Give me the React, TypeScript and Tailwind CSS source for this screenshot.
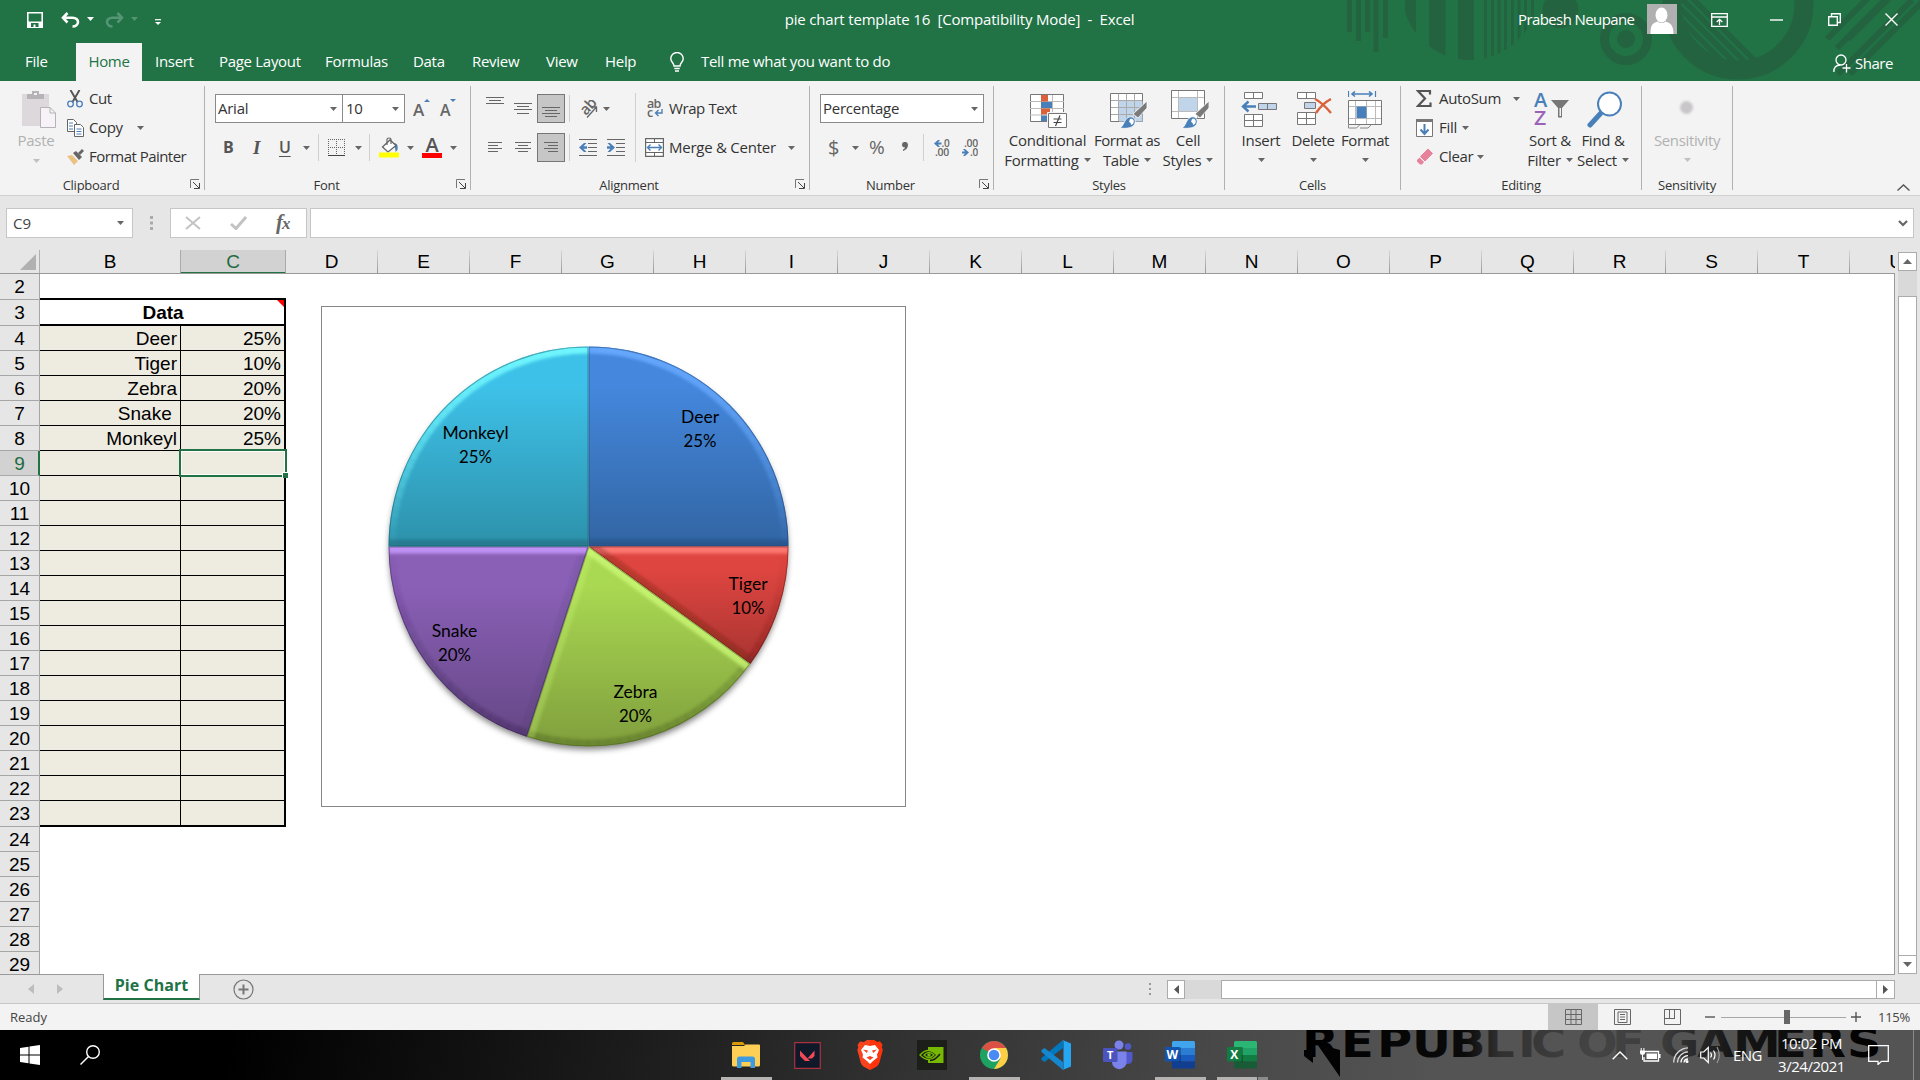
import React from "react";

type P = { children?: React.ReactNode; className?: string };

const Caret = ({ className = "text-[#666]" }: { className?: string }) => (
  <svg width="7" height="4" viewBox="0 0 7 4" className={`shrink-0 ${className}`}>
    <path d="M0 0h7L3.5 4z" fill="currentColor" />
  </svg>
);

const Svg = ({ w, h, children, className = "" }: P & { w: number; h: number }) => (
  <svg width={w} height={h} viewBox={`0 0 ${w} ${h}`} fill="none" className={`shrink-0 ${className}`}>
    {children}
  </svg>
);

/* ---------- Title bar ---------- */

const HeaderPattern = () => (
  <svg width="620" height="81" viewBox="1300 0 620 81" className="absolute right-0 top-0">
    <defs>
      <clipPath id="hp-disc"><circle cx="1470" cy="-8" r="68" /></clipPath>
      <clipPath id="hp-ring"><circle cx="1738" cy="4" r="66" /></clipPath>
    </defs>
    <g fill="#24633f">
      <path d="M1347 0h5v32h-5zM1356 0h5v41h-5zM1365 0h5v32h-5zM1373.500 0h5v52h-5zM1383 0h5v38h-5z" />
      <path
        clipPath="url(#hp-disc)"
        d="M1405 0h11v81h-11zM1429 0h16.500v81H1429zM1458 0h16v81h-16zM1484 0h3v81h-3zM1491 0h3v81h-3zM1497.500 0h3v81h-3zM1504 0h3v81h-3zM1511 0h3v81h-3zM1517.500 0h3v81h-3zM1524 0h3v81h-3zM1531 0h3v81h-3z"
      />
      <circle cx="1560.500" cy="10" r="18" />
      <circle cx="1626" cy="39" r="9" />
    </g>
    <g fill="none" stroke="#24633f">
      <circle cx="1626" cy="39" r="21.500" strokeWidth="9" />
      <circle cx="1738" cy="4" r="66" strokeWidth="19" />
      <g clipPath="url(#hp-ring)" strokeWidth="5.500">
        <path d="M1660 -12l90 90M1660 -1l90 90M1660 10l90 90M1671 -12l90 90M1682 -12l90 90" />
      </g>
      <g strokeWidth="6">
        <path d="M1827 39l42-42M1837 48l50-50M1848 39l42-42M1838 74l74-74M1850 74l74-74" />
      </g>
    </g>
  </svg>
);

const TitleBar = () => (
  <div className="relative z-10 flex h-[43px] items-start pt-[3px] text-[15px] text-white">
    <div className="flex h-[34px] w-[560px] items-center pl-[27px]">
      <Svg w={16} h={16}>
        <path d="M.8.8h14.400v14.400H.8z" stroke="#fff" strokeWidth="1.600" />
        <path d="M1 9.500h14V15H1z" fill="#fff" />
        <path d="M4 11h7.500v4H4z" fill="#217346" /><path d="M6.500 12.500h2V15h-2z" fill="#fff" />
      </Svg>
      <Svg w={19} h={16} className="ml-[18px]">
        <path d="M6.500 1L2 5.800l4.500 4.700M2 5.800h9.500c3.600 0 5.500 2 5.500 4.300 0 2.600-2.400 4.400-5.500 4.400" stroke="#fff" strokeWidth="2.600" />
      </Svg>
      <Caret className="mb-[3px] ml-[7px] text-white" />
      <Svg w={19} h={16} className="ml-[11px]">
        <path d="M12.500 1L17 5.800l-4.500 4.700M17 5.800H7.500C3.900 5.800 2 7.800 2 10.100c0 2.600 2.400 4.400 5.500 4.400" stroke="#549574" strokeWidth="2.600" />
      </Svg>
      <Caret className="mb-[3px] ml-[7px] text-[#549574]" />
      <Svg w={6} h={7} className="ml-[17px] mt-[4px]">
        <path d="M0 .7h6" stroke="#fff" strokeWidth="1.200" /><path d="M0 3h6L3 6z" fill="#fff" />
      </Svg>
    </div>
    <div className="flex h-[33px] w-[799px] items-center justify-center whitespace-pre tracking-[-0.180px]">
      pie chart template 16  [Compatibility Mode]  -  Excel
    </div>
    <div className="flex h-[33px] flex-1 items-center">
      <span className="ml-[159px] w-[129px] whitespace-nowrap tracking-[-0.600px]">Prabesh Neupane</span>
      <svg width="30" height="30" viewBox="0 0 30 30" className="-mt-[1px]">
        <path fill="#b0b0b0" d="M0 0h30v30H0z" />
        <ellipse cx="14.500" cy="11" rx="6" ry="7.500" fill="#fff" />
        <path d="M3.500 30c0-8 1.500-11 7-12.500 2.500 2 5.500 2 8 0 5.500 1.500 8 4.500 8 12.500z" fill="#fff" />
      </svg>
      <Svg w={17} h={14} className="ml-[34px]">
        <path d="M.7.7h15.600v12.600H.7zM.7 4h15.600" stroke="#fff" strokeWidth="1.300" />
        <path d="M8.500 12V6.500M5.700 9l2.800-2.700L11.300 9" stroke="#fff" strokeWidth="1.300" />
      </Svg>
      <Svg w={13} h={2} className="ml-[42px]"><path d="M0 1h13" stroke="#fff" strokeWidth="1.400" /></Svg>
      <Svg w={13} h={13} className="ml-[45px]">
        <path d="M.7 3.700h8.600v8.600H.7zM3.500 3V.7h8.800v8.800H10" stroke="#fff" strokeWidth="1.400" />
      </Svg>
      <Svg w={13} h={13} className="ml-[44px]">
        <path d="M.5.5l12 12M12.500.5l-12 12" stroke="#fff" strokeWidth="1.400" />
      </Svg>
    </div>
  </div>
);

const TabBar = () => (
  <div className="relative z-10 flex h-[38px] items-center whitespace-nowrap text-[15px] tracking-[-0.300px] text-white [&>span]:pb-[2px]">
    <span className="w-[76px] pl-[25px]">File</span>
    <span className="flex h-[38px] w-[66px] items-center justify-center bg-[#f3f3f3] text-[#217346]">Home</span>
    <span className="w-[76px] pl-[13px]">Insert</span>
    <span className="w-[107px] pl-px">Page Layout</span>
    <span className="w-[88px]">Formulas</span>
    <span className="w-[59px]">Data</span>
    <span className="w-[74px]">Review</span>
    <span className="w-[59px]">View</span>
    <span className="w-[65px]">Help</span>
    <Svg w={14} h={20}>
      <path d="M4 14c0-3-3.200-4-3.200-7.300a6.200 6.200 0 0112.400 0C13.200 10 10 11 10 14zM4.300 16.500h5.400M5 19h4" stroke="#fff" strokeWidth="1.400" />
    </Svg>
    <span className="ml-[17px] w-[1132px]">Tell me what you want to do</span>
    <Svg w={18} h={19} className="mt-[3px]">
      <circle cx="8" cy="6" r="5" stroke="#fff" strokeWidth="1.300" />
      <path d="M.8 18c0-4 2-7 6.500-7M9.500 14h8M13.500 10v8.500" stroke="#fff" strokeWidth="1.300" />
    </Svg>
    <span className="ml-[4px] mt-[5px] tracking-[-0.500px]">Share</span>
  </div>
);

/* ---------- Ribbon ---------- */

const Sep = ({ className = "" }: { className?: string }) => <div className={`w-px shrink-0 bg-[#d0d0d0] ${className}`} />;

const Group = ({ label, launcher, width, children }: P & { label: string; launcher?: boolean; width: string }) => (
  <>
    <section className={`flex h-[114px] shrink-0 flex-col ${width}`}>
      <div className="flex h-[93px] items-start">{children}</div>
      <div className="flex h-[23px] items-center">
        <span className="mt-[2px] flex-1 whitespace-nowrap text-center text-[13px] leading-[16px] text-[#333]">{label}</span>
        {launcher && (
          <Svg w={10} h={10} className="ml-[8px] mr-[4px]">
            <path d="M.5 9V.5H9" stroke="#777" />
            <path d="M3 3l6 6M9.500 4v5.500H4" stroke="#444" />
          </Svg>
        )}
      </div>
    </section>
    <div className="mt-[5px] h-[104px] w-px shrink-0 bg-[#b1b1b1]" />
  </>
);

const Big = ({ icon, lines, width, caretRow, muted }: { icon: React.ReactNode; lines: string[]; width: string; caretRow?: boolean; muted?: boolean }) => (
  <div className={`flex shrink-0 flex-col items-center whitespace-nowrap text-[15px] leading-[20px] tracking-[-0.250px] ${muted ? "text-[#b1b1b1]" : "text-[#333]"} ${width}`}>
    <div className="flex h-[49px] items-end pb-px">{icon}</div>
    <span>{lines[0]}</span>
    <span className="flex h-[20px] items-center gap-[5px]">
      {!caretRow && lines[1]}
      <Caret className={muted ? "text-[#c0c0c0]" : "text-[#666]"} />
    </span>
  </div>
);

const Lines = ({ rows, w = 18, h }: { rows: [number, number, number][]; w?: number; h: number }) => (
  <Svg w={w} h={h}>
    {rows.map(([x1, x2, y], i) => (
      <path key={i} d={`M${x1} ${y + 0.5}H${x2}`} stroke="#666" />
    ))}
  </Svg>
);

const IndentIcon = ({ flip }: { flip?: boolean }) => (
  <Svg w={19} h={17}>
    <path d="M0 .5h18M9 4.500h9M9 8.500h9M9 12.500h9M0 16.500h18" stroke="#666" />
    <g transform={flip ? "matrix(-1 0 0 1 8 0)" : undefined}>
      <path d="M0 8.500L5 4h2.500L4.500 7.200H8v2.600H4.500L7.500 13H5z" fill="#4a7fb8" />
    </g>
  </Svg>
);

const Brush = ({ x, y }: { x: number; y: number }) => (
  <g transform={`translate(${x} ${y})`}>
    <path d="M27 0v7L18 17l-5-4z" fill="#7a7a7a" stroke="#fff" strokeWidth=".8" />
    <path d="M0 27c4-2 4-9 9-11 4-1 7 2 6 6-1 5-9 6-15 5z" fill="#4a80b9" stroke="#fff" strokeWidth=".8" />
    <path d="M10 18c3-1 5 2 3 5l-2 1c0-2-1-3-2-3z" fill="#fff" />
  </g>
);

const Ribbon = () => (
  <div className="flex h-[115px] border-b border-[#d0d0d0] bg-[#f3f3f3] text-[15px] tracking-[-0.250px] text-[#333]">
    <Group label="Clipboard" launcher width="w-[204px]">
      <div className="flex w-[67px] flex-col items-center pl-[5px] text-[#b1b1b1]">
        <Svg w={34} h={38} className="ml-[6px] mt-[9px]">
          <path d="M0 4h27v32H0z" fill="#dcd8dc" />
          <path d="M5 9V4h5V1h7v3h5v5z" fill="#b5b3b5" />
          <path d="M12 3h3v2h-3z" fill="#f3f3f3" />
          <path d="M18.500 17.500h9.500l5.500 5.500v14.500h-15z" fill="#f6f2f7" stroke="#b5b3b5" />
          <path d="M28 17.500V23h5.500" stroke="#b5b3b5" />
        </Svg>
        <span className="mt-[2px] leading-[20px]">Paste</span>
        <Caret className="mt-[9px] text-[#c0c0c0]" />
      </div>
      <div className="flex flex-col pt-[3px]">
        <div className="flex h-[29px] items-center">
          <Svg w={16} h={18}>
            <path d="M3.500 0l7 12M12.500 0l-7 12" stroke="#555" strokeWidth="1.900" />
            <circle cx="3.500" cy="14" r="2.800" stroke="#4a7fb8" strokeWidth="1.300" />
            <circle cx="12.500" cy="14" r="2.800" stroke="#4a7fb8" strokeWidth="1.300" />
          </Svg>
          <span className="ml-[6px] tracking-[-0.500px]">Cut</span>
        </div>
        <div className="flex h-[29px] items-center">
          <Svg w={17} h={18}>
            <path d="M.5.5h6l3 3v9h-9z" fill="#fff" stroke="#666" />
            <path d="M7.500 5.500h6l3 3v9h-9z" fill="#fff" stroke="#666" />
            <path d="M2 4h4M2 7h4M2 10h4M9.500 10h5M9.500 12.500h5M9.500 15h5" stroke="#4a7fb8" />
          </Svg>
          <span className="ml-[5px] w-[48px] tracking-[-0.400px]">Copy</span>
          <Caret />
        </div>
        <div className="flex h-[29px] items-center">
          <Svg w={17} h={16}>
            <path d="M0 7l5-1 6 6-4 4z" fill="#eac282" />
            <path d="M6 4l3-2 6 6-3 3z" fill="#666" /><path d="M11 4l4-4 2 2-4 4z" fill="#666" />
          </Svg>
          <span className="ml-[5px] whitespace-nowrap tracking-[-0.530px]">Format Painter</span>
        </div>
      </div>
    </Group>

    <Group label="Font" launcher width="w-[265px]">
      <div className="flex flex-col pl-[10px] pt-[8px]">
        <div className="flex h-[39px] items-center">
          <div className="flex h-[29px] w-[128px] items-center justify-between border border-[#8a8a8a] bg-white pl-[2px] pr-[5px]">Arial <Caret /></div>
          <div className="-ml-px flex h-[29px] w-[63px] items-center justify-between border border-[#8a8a8a] bg-white pl-[3px] pr-[5px]">10 <Caret /></div>
          <span className="ml-[8px] mt-[1px] w-[11px] text-[17px] font-semibold leading-none text-[#666]">A</span>
          <Svg w={6} h={3} className="mb-[17px]"><path d="M0 3h6L3 0z" fill="#4a7fb8" /></Svg>
          <span className="ml-[10px] mt-[2px] w-[10px] text-[16px] font-semibold leading-none text-[#666]">A</span>
          <Svg w={6} h={3} className="mb-[16px]"><path d="M0 0h6L3 3z" fill="#4a7fb8" /></Svg>
        </div>
        <div className="flex h-[39px] items-center text-[16px] text-[#555]">
          <span className="ml-[8px] w-[30px] pb-px font-bold">B</span>
          <span className="w-[26px] font-['Liberation_Serif',serif] text-[19px] font-bold italic leading-none">I</span>
          <span className="w-[24px] pb-px font-semibold underline underline-offset-[3px]">U</span>
          <Caret />
          <Sep className="ml-[8px] h-[27px]" />
          <Svg w={17} h={17} className="ml-[9px]">
            <path d="M.5 0v17M8.500 0v17M16.500 0v17M0 .5h17M0 8.500h17" stroke="#666" strokeDasharray="1 1" />
            <path d="M0 16.500h17" stroke="#444" />
          </Svg>
          <Caret className="ml-[10px] text-[#666]" />
          <Sep className="ml-[7px] h-[27px]" />
          <Svg w={21} h={21} className="ml-[9px]">
            <path d="M14 6c5 0 5 3 4.500 7l-2 2c0-4-.5-5-3.500-7z" fill="#4a7fb8" />
            <path d="M3.500 10L11 3l6 5.500-8 6.500z" fill="#fff" stroke="#666" strokeWidth="1.300" />
            <path d="M8 8V2.500C8 .5 12 .5 12 2.500V7" stroke="#666" strokeWidth="1.200" />
            <path d="M0 15.500h20v5H0z" fill="#ff0" />
          </Svg>
          <Caret className="ml-[7px] text-[#666]" />
          <div className="ml-[8px] flex w-[20px] flex-col items-center">
            <span className="text-[20px] font-semibold leading-[15px]">A</span>
            <div className="mt-px h-[5px] w-[20px] bg-[#f00]" />
          </div>
          <Caret className="ml-[8px] text-[#666]" />
        </div>
      </div>
    </Group>

    <Group label="Alignment" launcher width="w-[338px]">
      <div className="flex flex-col pt-[8px]">
        <div className="flex h-[39px] items-center">
          <div className="ml-[15px] flex w-[51px] justify-between">
            <div className="-mt-[6px]"><Lines h={7} rows={[[0, 18, 0], [3, 15, 3], [0, 18, 6]]} /></div>
            <div className="mr-[5px]"><Lines h={11} rows={[[0, 18, 0], [3, 15, 3], [0, 18, 6], [3, 15, 10]]} /></div>
          </div>
          <div className="flex h-[29px] w-[28px] items-end justify-center border border-[#777] bg-[#c6c6c6] pb-[4px]">
            <Lines h={11} rows={[[0, 18, 0], [3, 15, 3], [0, 18, 6], [3, 15, 9]]} />
          </div>
          <Sep className="ml-[4px] h-[27px]" />
          <Svg w={19} h={18} className="ml-[9px]">
            <text x="0" y="0" transform="translate(7 16) rotate(-48)" fontSize="15" fontWeight="600" fill="#666" letterSpacing="-.5">ab</text>
            <path d="M8 17.500L17.500 7M17.500 12V7h-5" stroke="#666" strokeWidth="1.300" />
          </Svg>
          <Caret className="ml-[5px] text-[#666]" />
        </div>
        <div className="flex h-[39px] items-center">
          <div className="ml-[17px] flex w-[49px] justify-between">
            <Lines w={14} h={11} rows={[[0, 14, 0], [0, 10, 3], [0, 14, 6], [0, 10, 9]]} />
            <div className="mr-[6px]"><Lines w={16} h={11} rows={[[0, 16, 0], [3, 13, 3], [0, 16, 6], [3, 13, 9]]} /></div>
          </div>
          <div className="flex h-[29px] w-[28px] items-center justify-center border border-[#777] bg-[#c6c6c6]">
            <Lines w={14} h={11} rows={[[0, 14, 0], [4, 14, 3], [0, 14, 6], [4, 14, 9]]} />
          </div>
          <Sep className="ml-[4px] mr-[9px] h-[27px]" />
          <IndentIcon />
          <div className="w-[9px]" />
          <IndentIcon flip />
        </div>
      </div>
      <Sep className="ml-[9px] mt-[12px] h-[69px]" />
      <div className="flex flex-col pl-[9px] pt-[8px]">
        <div className="flex h-[39px] items-center">
          <Svg w={17} h={19} className="ml-[2px]">
            <text x="0" y="9" fontSize="12.500" fontWeight="600" fill="#666" textLength="14">ab</text>
            <text x="0" y="17.500" fontSize="12.500" fontWeight="600" fill="#666">c</text>
            <path d="M15 10v4H9M11.500 11L8.500 14l3 3" stroke="#4a7fb8" strokeWidth="1.400" />
          </Svg>
          <span className="ml-[5px] whitespace-nowrap tracking-[-0.400px]">Wrap Text</span>
        </div>
        <div className="flex h-[39px] items-center">
          <Svg w={19} h={19}>
            <path d="M.6.6h17.800v17.800H.6z" fill="#fff" stroke="#666" strokeWidth="1.200" />
            <path d="M.6 4.500h17.800M.6 14.500h17.800M9.500 0v4.500M9.500 14.500V19" stroke="#666" />
            <path d="M2.500 9.500h14M5.500 6.500l-3 3 3 3M13.500 6.500l3 3-3 3" stroke="#4a7fb8" strokeWidth="1.400" />
          </Svg>
          <span className="ml-[5px] w-[119px] whitespace-nowrap">Merge &amp; Center</span>
          <Caret />
        </div>
      </div>
    </Group>

    <Group label="Number" launcher width="w-[183px]">
      <div className="flex flex-col pl-[10px] pt-[8px]">
        <div className="flex h-[39px] items-center">
          <div className="flex h-[29px] w-[164px] items-center justify-between border border-[#8a8a8a] bg-white pl-[2px] pr-[5px]">Percentage <Caret /></div>
        </div>
        <div className="flex h-[39px] items-center text-[#666]">
          <span className="ml-[8px] w-[24px] text-[20px]">$</span>
          <Caret />
          <span className="ml-[10px] w-[33px] text-[19px]">%</span>
          <Svg w={6} h={9} className="-mt-[2px]"><path d="M0 3a3 3 0 016-.2C6 6 4 8 1 9V7.500c1.400-.6 2-1.200 2-2C1 5.500 0 4.500 0 3z" fill="#666" /></Svg>
          <Sep className="ml-[15px] h-[27px]" />
          <Svg w={16} h={18} className="ml-[10px]">
            <path d="M0 4.500L4 1h2L4 3.500h3.500v2H4L6 8H4z" fill="#4a7fb8" />
            <text x="7.500" y="8" fontSize="10" fontWeight="600" fill="#666" textLength="8" lengthAdjust="spacingAndGlyphs">.0</text>
            <text x="1" y="17" fontSize="10" fontWeight="600" fill="#666" textLength="14" lengthAdjust="spacingAndGlyphs">.00</text>
          </Svg>
          <Svg w={16} h={18} className="ml-[12px]">
            <text x="2" y="8" fontSize="10" fontWeight="600" fill="#666" textLength="14" lengthAdjust="spacingAndGlyphs">.00</text>
            <text x="8" y="17" fontSize="10" fontWeight="600" fill="#666" textLength="8" lengthAdjust="spacingAndGlyphs">.0</text>
            <path d="M7 13.500L3 10H1l2 2.500H0v2h3L1 17h2z" fill="#4a7fb8" />
          </Svg>
        </div>
      </div>
    </Group>

    <Group label="Styles" width="w-[230px]">
      <Big
        width="w-[91px] ml-[8px]"
        lines={["Conditional", "Formatting"]}
        icon={
          <Svg w={38} h={35} className="ml-[2px]">
            <path d="M.5.5h33v27H.5z" fill="#fff" stroke="#777" />
            <path d="M0 7.500h34M0 14.500h34M0 21h34M11.500 1v26M22.500 1v26" stroke="#bbb" />
            <path d="M11 1h7v6.500h-7zM11 14.500h9v6h-9z" fill="#d9613b" />
            <path d="M11 8h11v6H11zM11 21.500h6V27h-6z" fill="#4a80b9" />
            <path d="M17.500 18.500h20v16h-20z" fill="#fff" stroke="#f3f3f3" />
            <path d="M18.500 19.500h18v14h-18z" fill="#fff" stroke="#777" />
            <path d="M23.500 25h8M23.500 28.500h8M30 21.500L25.500 32" stroke="#444" strokeWidth="1.200" />
          </Svg>
        }
      />
      <Big
        width="w-[68px] tracking-[-0.400px]"
        lines={["Format as", "Table"]}
        icon={
          <Svg w={38} h={36} className="ml-[3px]">
            <path d="M.5.5h32v28H.5z" fill="#fff" stroke="#777" />
            <path d="M9 8h23.500v20.500H9z" fill="#c0d4ea" />
            <path d="M1 7.500h31M1 14.500h31M1 21.500h31M8.500 1v27M16.500 1v27M24.500 1v27" stroke="#aaa" />
            <Brush x={10} y={8} />
          </Svg>
        }
      />
      <Big
        width="w-[54px]"
        lines={["Cell", "Styles"]}
        icon={
          <Svg w={38} h={39} className="ml-[3px]">
            <path d="M.5.500h33v28H.5z" fill="#fff" stroke="#777" />
            <path d="M1 7.500h32M1 21.500h32M7.500 1v27M26.500 1v27" stroke="#bbb" />
            <path d="M8 8h18v13H8z" fill="#c0d4ea" />
            <Brush x={11} y={11} />
          </Svg>
        }
      />
    </Group>

    <Group label="Cells" width="w-[175px]">
      <Big
        width="w-[52px] ml-[10px]"
        lines={["Insert"]}
        caretRow
        icon={
          <Svg w={38} h={38} className="-ml-[2px]">
            <path d="M3.500 1.500h18v6h-18zM3.500 23.500h18v12h-18zM12.500 1.500v6M12.500 23.500v12M3.500 29.500h18" fill="#fff" stroke="#777" />
            <path d="M17.500 12.500h18v6h-18z" fill="#c0d4ea" stroke="#777" /><path d="M26.500 12.500v6" stroke="#777" />
            <path d="M15 15.500H2M7.500 10.500l-5.500 5 5.500 5" stroke="#4a80b9" strokeWidth="2.400" />
          </Svg>
        }
      />
      <Big
        width="w-[52px] tracking-[-0.350px]"
        lines={["Delete"]}
        caretRow
        icon={
          <Svg w={36} h={38} className="ml-[3px]">
            <path d="M.5 1.500h18v6H.5zM.5 21.500h18v12H.5zM9.500 1.500v6M9.500 21.500v12M.5 27.500h18" fill="#fff" stroke="#777" />
            <path d="M7.500 11.500h11v6h-11z" fill="#c0d4ea" stroke="#777" />
            <path d="M18 8c6 3 11 8 16 14M34 8c-6 3-11 8-15 14" stroke="#d9613b" strokeWidth="2.400" />
          </Svg>
        }
      />
      <Big
        width="w-[52px] tracking-[-0.400px]"
        lines={["Format"]}
        caretRow
        icon={
          <Svg w={35} h={38}>
            <path d="M.5 0v6M27.500 0v6" stroke="#4a80b9" strokeWidth="1.200" />
            <path d="M4 3h20M7 .5L4 3l3 2.500M21 .5L24 3l-3 2.500" stroke="#4a80b9" strokeWidth="1.600" />
            <path d="M.5 9.500h33v24H.5z" fill="#fff" stroke="#777" />
            <path d="M1 15.500h32M1 27.500h32M7.500 10v23M18.500 10v23M27.500 10v23" stroke="#bbb" />
            <path d="M8.500 15.500h10v11.500h-10z" fill="#4a80b9" />
            <path d="M.5 34v3h8l3-3M12 37h8l3-3" stroke="#888" />
          </Svg>
        }
      />
    </Group>

    <Group label="Editing" width="w-[240px]">
      <div className="ml-[15px] flex w-[110px] flex-col pt-[3px]">
        <div className="flex h-[29px] items-center">
          <Svg w={17} h={17}>
            <path d="M14 4.500V1H2l7 7.500L2 16h12.500v-3.500" stroke="#555" strokeWidth="2.200" />
          </Svg>
          <span className="ml-[6px] w-[74px] tracking-[-0.350px]">AutoSum</span><Caret />
        </div>
        <div className="flex h-[29px] items-center">
          <Svg w={17} h={18}>
            <path d="M.5.5h16v17H.5z" fill="#fff" stroke="#777" /><path d="M0 0h17v3H0z" fill="#777" />
            <path d="M8.500 5v10M4.500 10.500l4 4.500 4-4.500" stroke="#4a7fb8" strokeWidth="2" />
          </Svg>
          <span className="ml-[6px] w-[23px]">Fill</span><Caret />
        </div>
        <div className="flex h-[29px] items-center">
          <Svg w={17} h={16}>
            <path d="M12 0l4.500 4.500L9 12 4.500 7.500z" fill="#e8829a" stroke="#e8829a" strokeLinejoin="round" />
            <path d="M3.500 8.500L8 13l-2 2.500H4L1 12.500V11z" fill="#e8829a" />
          </Svg>
          <span className="ml-[6px] w-[38px] tracking-[-0.400px]">Clear</span><Caret />
        </div>
      </div>
      <Big
        width="w-[48px]"
        lines={["Sort &", "Filter"]}
        icon={
          <Svg w={36} h={37} className="ml-[3px]">
            <text x="0" y="15" fontSize="19" fontWeight="600" fill="#4a80b9" textLength="13" lengthAdjust="spacingAndGlyphs">A</text>
            <text x="0" y="33" fontSize="19" fontWeight="600" fill="#9a63b8" textLength="12" lengthAdjust="spacingAndGlyphs">Z</text>
            <path d="M17 8h18l-7 8v9.500h-4V16z" fill="#777" /><path d="M25.500 16h1.500v8h-1.500z" fill="#f3f3f3" />
          </Svg>
        }
      />
      <Big
        width="w-[58px]"
        lines={["Find &", "Select"]}
        icon={
          <Svg w={36} h={38} className="ml-[3px]">
            <path d="M3 34l11-12" stroke="#4a80b9" strokeWidth="5" strokeLinecap="round" />
            <circle cx="22.500" cy="13" r="11.500" fill="#fff" stroke="#4a80b9" strokeWidth="2" />
          </Svg>
        }
      />
    </Group>

    <Group label="Sensitivity" width="w-[90px]">
      <Big
        muted
        caretRow
        width="w-[90px] tracking-[-0.350px]"
        lines={["Sensitivity"]}
        icon={<div className="mb-[15px] mr-[2px] size-[13px] rounded-full bg-[#c9c6c9] blur-[1px]" />}
      />
    </Group>
    <div className="flex flex-1 items-end justify-end pb-[4px] pr-[10px]">
      <Svg w={13} h={7}><path d="M.5 6.500l6-5.500 6 5.500" stroke="#555" strokeWidth="1.400" /></Svg>
    </div>
  </div>
);

/* ---------- Formula bar ---------- */

const FormulaBar = () => (
  <div className="flex h-[54px] items-start bg-[#e6e6e6] pl-[6px] pt-[12px]">
    <div className="flex h-[30px] w-[127px] items-center justify-between border border-[#c6c6c6] bg-white pl-[6px] pr-[8px] text-[15px] tracking-[0px] text-[#444]">
      C9 <Caret />
    </div>
    <Svg w={3} h={14} className="ml-[17px] mt-[8px]">
      <path d="M0 0h3v3H0zM0 5.500h3v3H0zM0 11h3v3H0z" fill="#aaa" />
    </Svg>
    <div className="ml-[17px] flex h-[30px] w-[137px] items-center border border-[#c6c6c6] bg-white">
      <Svg w={16} h={14} className="ml-[14px]"><path d="M1 1l14 12M15 1L1 13" stroke="#c3c3c3" strokeWidth="2" /></Svg>
      <Svg w={17} h={14} className="ml-[29px]"><path d="M1 8l5 4.500L16 1" stroke="#c3c3c3" strokeWidth="3" /></Svg>
      <span className="-mt-[2px] ml-[29px] font-['Liberation_Serif',serif] text-[21px] font-bold italic leading-none text-[#666]">
        f<span className="-ml-px text-[17px]">x</span>
      </span>
    </div>
    <div className="ml-[3px] flex h-[30px] w-[1604px] items-center justify-end border border-[#c6c6c6] bg-white pr-[5px]">
      <Svg w={10} h={7}><path d="M1 1l4 4 4-4" stroke="#666" strokeWidth="2.200" /></Svg>
    </div>
  </div>
);

/* ---------- Sheet ---------- */

const data: Record<number, [string, string]> = {
  4: ["Deer", "25%"],
  5: ["Tiger", "10%"],
  6: ["Zebra", "20%"],
  7: ["Snake\u00a0", "20%"],
  8: ["Monkeyl", "25%"],
};
const rowNumbers = Array.from({ length: 28 }, (_, i) => i + 2);
const wideColumns = "DEFGHIJKLMNOPQRST".split("");

const ColumnHeaders = () => (
  <div className="flex h-[24px] w-[1895px] overflow-hidden border-b border-[#999] bg-[#e6e6e6] text-center text-[19px] leading-[24px] text-black">
    <div className="flex w-[40px] shrink-0 items-start justify-end border-r border-[#b0b0b0] pr-[3px] pt-[4px]">
      <Svg w={16} h={16}><path d="M16 0v16H0z" fill="#b1b1b1" /></Svg>
    </div>
    <div className="w-[140px] shrink-0">B</div>
    <div className="h-[24px] w-[106px] shrink-0 border-x border-b-2 border-x-[#aaa] border-b-[#217346] bg-[#d2d2d2] text-[#1f6b42]">C</div>
    {wideColumns.map((c) => (
      <div key={c} className="flex w-[92px] shrink-0">
        <span className="flex-1">{c}</span>
        <div className="w-px bg-gradient-to-b from-[#d8d8d8] to-[#999]" />
      </div>
    ))}
    <div className="w-[92px] shrink-0">U</div>
  </div>
);

const SheetRow = ({ n }: { n: number }) => {
  const sel = n === 9;
  const tall = n < 4 || n === 23;
  const inTable = n >= 4 && n <= 23;
  const bottom = n === 23 ? "border-b-2" : "border-b";
  return (
    <div className={`flex shrink-0 text-[19px] leading-[25px] text-black ${tall ? "h-[26px]" : "h-[25px]"}`}>
      <div
        className={
          sel
            ? "w-[40px] border-b border-r-2 border-b-[#aaa] border-r-[#217346] bg-[#d2d2d2] pl-px text-center text-[#1f6b42]"
            : "w-[40px] border-b border-r border-[#a6a6a6] bg-[#e6e6e6] text-center"
        }
      >
        {n}
      </div>
      {n === 2 && <div className="w-[246px] border-b-2 border-black" />}
      {n === 3 && (
        <div className="flex w-[246px] border-b-2 border-r-2 border-black">
          <span className="flex-1 pl-[2px] text-center font-bold">Data</span>
          <Svg w={7} h={7} className="-ml-[7px]"><path d="M0 0h7v7z" fill="#f00" /></Svg>
        </div>
      )}
      {inTable && (
        <>
          <div className={`w-[141px] border-r border-black bg-[#eeece1] pr-[3px] text-right ${bottom}`}>{data[n]?.[0]}</div>
          <div className={`relative w-[105px] border-r-2 border-black bg-[#eeece1] pr-[3px] text-right ${bottom}`}>
            {data[n]?.[1]}
            {sel && (
              <div className="absolute -left-[2px] -top-[2px] z-10 h-[28px] w-[108px] border-2 border-[#217346]">
                <div className="h-full border border-white" />
                <div className="absolute -bottom-[3px] -right-[3px] size-[6px] border-l border-t border-white bg-[#217346]" />
              </div>
            )}
          </div>
        </>
      )}
    </div>
  );
};

const CX = 267;
const CY = 240;
const R = 200;
const at = (deg: number, r = R): [number, number] => {
  const a = (deg * Math.PI) / 180;
  return [CX + r * Math.sin(a), CY - r * Math.cos(a)];
};
const slices = [
  { id: "deer", from: 0, to: 90, top: "#4487dc", bottom: "#3265a3", light: "#68aaff", dark: "#173a66", name: "Deer", value: "25%", x: 378.5, y: 116 },
  { id: "tiger", from: 90, to: 126, top: "#de4540", bottom: "#a83431", light: "#ff7b76", dark: "#5f1513", name: "Tiger", value: "10%", x: 426.5, y: 283 },
  { id: "zebra", from: 126, to: 198, top: "#a9d852", bottom: "#809f3d", light: "#cdfb78", dark: "#465c1a", name: "Zebra", value: "20%", x: 314, y: 391 },
  { id: "snake", from: 198, to: 270, top: "#8a60b7", bottom: "#664786", light: "#c496fa", dark: "#372150", name: "Snake", value: "20%", x: 133, y: 330 },
  { id: "monkey", from: 270, to: 360, top: "#3ec1e8", bottom: "#2d91aa", light: "#74fbff", dark: "#12505f", name: "Monkeyl", value: "25%", x: 154, y: 132 },
];

const PieChart = () => (
  <div className="absolute left-[321px] top-[32px] h-[501px] w-[585px] border border-[#868686] bg-white">
    <svg width="583" height="499" viewBox="0.5 0.5 583 499">
      <defs>
        <filter id="bevel" x="-10%" y="-10%" width="120%" height="120%"><feGaussianBlur stdDeviation="1.800" /></filter>
        <filter id="shadow" x="-10%" y="-10%" width="120%" height="120%"><feGaussianBlur stdDeviation="3" /></filter>
      </defs>
      <circle cx={CX} cy={CY + 4} r={R - 1} fill="#000" opacity="0.5" filter="url(#shadow)" />
      {slices.map((s) => {
        const [x1, y1] = at(s.from);
        const [x2, y2] = at(s.to);
        const d = `M${CX} ${CY}L${x1} ${y1}A${R} ${R} 0 0 1 ${x2} ${y2}Z`;
        const edges: { d: string; lit: number }[] = [];
        for (let a = s.from; a < s.to; a += 3) {
          const [ax, ay] = at(a);
          const [bx, by] = at(a + 3.2);
          edges.push({ d: `M${ax} ${ay}L${bx} ${by}`, lit: Math.cos(((a + 1.5) * Math.PI) / 180) });
        }
        edges.push({ d: `M${CX} ${CY}L${x1} ${y1}`, lit: Math.cos(((s.from - 90) * Math.PI) / 180) });
        edges.push({ d: `M${CX} ${CY}L${x2} ${y2}`, lit: Math.cos(((s.to + 90) * Math.PI) / 180) });
        return (
          <g key={s.id}>
            <defs>
              <linearGradient id={`g-${s.id}`} x1="0" y1="0" x2="0" y2="1">
                <stop offset="0" stopColor={s.top} />
                <stop offset="0.2" stopColor={s.top} />
                <stop offset="1" stopColor={s.bottom} />
              </linearGradient>
              <clipPath id={`c-${s.id}`}><path d={d} /></clipPath>
            </defs>
            <path d={d} fill={`url(#g-${s.id})`} />
            <g clipPath={`url(#c-${s.id})`}>
              <g filter="url(#bevel)" strokeWidth="14">
                {edges.map((e, i) => (
                  <path key={i} d={e.d} stroke={e.lit > 0 ? s.light : s.dark} strokeOpacity={e.lit > 0 ? e.lit * 0.9 : -e.lit * 0.35} />
                ))}
              </g>
              <path d={d} fill="none" stroke={s.dark} strokeOpacity="0.450" strokeWidth="2" />
            </g>
          </g>
        );
      })}
      <g fontFamily="Lato, sans-serif" fontSize="17.500" textAnchor="middle" fill="#000">
        {slices.map((s) => (
          <g key={s.id}>
            <text x={s.x} y={s.y}>{s.name}</text>
            <text x={s.x} y={s.y + 24} textLength="33" lengthAdjust="spacingAndGlyphs">{s.value}</text>
          </g>
        ))}
      </g>
    </svg>
  </div>
);

const Sheet = () => (
  <div className="flex h-[724px] bg-[#e6e6e6] font-['Liberation_Sans',Arial,sans-serif]">
    <div className="flex w-[1895px] flex-col">
      <ColumnHeaders />
      <div className="relative flex h-[700px] flex-col overflow-hidden border-r border-[#999] bg-white">
        {rowNumbers.map((n) => <SheetRow key={n} n={n} />)}
        <PieChart />
      </div>
    </div>
    <div className="ml-[3px] flex w-[19px] flex-col pt-[2px]">
      <div className="flex h-[19px] items-center justify-center border border-[#ababab] bg-white">
        <Svg w={9} h={5}><path d="M0 5h9L4.500 0z" fill="#666" /></Svg>
      </div>
      <div className="h-[25px] bg-[#d9d9d9]" />
      <div className="h-[660px] border border-[#ababab] bg-white" />
      <div className="flex h-[18px] items-center justify-center border border-t-0 border-[#ababab] bg-white">
        <Svg w={9} h={5}><path d="M0 0h9L4.500 5z" fill="#666" /></Svg>
      </div>
    </div>
  </div>
);

/* ---------- Sheet tabs and status bar ---------- */

const SheetTabs = () => (
  <div className="flex h-[29px] items-start bg-[#e6e6e6]">
    <div className="flex h-[29px] w-[103px] items-center border-t border-[#999] pl-[28px]">
      <Svg w={6} h={10}><path d="M6 0v10L0 5z" fill="#bdbdbd" /></Svg>
      <Svg w={6} h={10} className="ml-[23px]"><path d="M0 0v10l6-5z" fill="#bdbdbd" /></Svg>
    </div>
    <div className="flex h-[26px] w-[97px] items-center justify-center whitespace-nowrap border-x border-b-2 border-x-[#999] border-b-[#217346] bg-white pb-[3px] text-[16px] font-bold tracking-[0.050px] text-[#217346]">
      Pie Chart
    </div>
    <div className="flex h-[29px] w-[1695px] items-center border-t border-[#999]">
      <Svg w={21} h={21} className="ml-[33px] mr-[895px]">
        <circle cx="10.500" cy="10.500" r="9.500" stroke="#777" strokeWidth="1.200" />
        <path d="M10.500 5.500v10M5.500 10.500h10" stroke="#777" strokeWidth="2" />
      </Svg>
      <Svg w={3} h={13} className="mr-[15px]"><path d="M0 0h2v2H0zM0 5h2v2H0zM0 10h2v2H0z" fill="#999" /></Svg>
      <div className="flex h-[19px] w-[18px] items-center justify-center border border-[#ababab] bg-white">
        <Svg w={5} h={9}><path d="M5 0v9L0 4.500z" fill="#555" /></Svg>
      </div>
      <div className="h-[19px] w-[36px] bg-[#d9d9d9]" />
      <div className="h-[19px] w-[656px] border border-[#ababab] bg-white" />
      <div className="flex h-[19px] w-[18px] items-center justify-center border border-l-0 border-[#ababab] bg-white">
        <Svg w={5} h={9}><path d="M0 0v9l5-4.500z" fill="#555" /></Svg>
      </div>
    </div>
  </div>
);

const StatusBar = () => (
  <div className="flex h-[27px] items-center border-t border-[#c6c6c6] bg-[#f3f3f3] text-[13px] text-[#444]">
    <span className="w-[1548px] pl-[10px] pt-[2px]">Ready</span>
    <div className="flex h-[26px] w-[50px] items-center justify-center bg-[#c6c6c6]">
      <Svg w={17} h={16}><path d="M.5.5h16v15H.5zM6 0v16M11 0v16M0 5.500h17M0 10.500h17" stroke="#666" /></Svg>
    </div>
    <Svg w={17} h={16} className="ml-[16px]">
      <path d="M.5.5h16v15H.5z" stroke="#666" /><path d="M4 3h9v10.500H4z" stroke="#666" /><path d="M6 5.500h5M6 8h5M6 10.500h5" stroke="#666" />
    </Svg>
    <Svg w={17} h={16} className="ml-[33px]">
      <path d="M.5.5h16v15H.5zM5.500 0v9M0 9.500h10.500M10.500 0v10" stroke="#666" />
    </Svg>
    <Svg w={10} h={2} className="ml-[24px]"><path d="M0 1h10" stroke="#555" strokeWidth="1.400" /></Svg>
    <div className="ml-[6px] flex w-[125px] items-center">
      <div className="h-px w-[63px] bg-[#a6a6a6]" />
      <div className="h-[14px] w-[6px] bg-[#666]" />
      <div className="h-px flex-1 bg-[#a6a6a6]" />
    </div>
    <Svg w={10} h={10} className="ml-[5px]"><path d="M0 5h10M5 0v10" stroke="#555" strokeWidth="1.400" /></Svg>
    <span className="ml-[17px] pt-[2px] tracking-[-0.300px]">115%</span>
  </div>
);

/* ---------- Taskbar ---------- */

const TaskSlot = ({ children, open, className = "" }: P & { open?: boolean }) => (
  <div className={`flex h-[50px] w-[62px] shrink-0 flex-col items-center ${className}`}>
    <div className="flex h-[47px] items-center justify-center pt-[3px]">{children}</div>
    {open && <div className="h-[3px] w-[51px] bg-[#b5b3b2]" />}
  </div>
);

const OfficeIcon = ({ letter, colors, box }: { letter: string; colors: string[]; box: string }) => (
  <Svg w={30} h={28}>
    <path d="M7 1.500Q7 0 8.500 0H28.500Q30 0 30 1.500V7H7z" fill={colors[0]} />
    <path d="M7 7h23v7H7z" fill={colors[1]} />
    <path d="M7 14h23v6.500H7z" fill={colors[2]} />
    <path d="M7 20.500h23V26q0 1.500-1.500 1.500h-20Q7 27.500 7 26z" fill={colors[3]} />
    <path d="M7 6h9v15H7z" fill="#000" opacity=".25" />
    <rect x="0" y="6" width="14.500" height="14.500" rx="1.200" fill={box} />
    <text x="7.200" y="17.500" fontSize="12" fontWeight="700" fill="#fff" textAnchor="middle">{letter}</text>
  </Svg>
);

/* Horizontal start of each letter of the wallpaper slogan, relative to its left end */
const sloganStretch = 1.2;
const sloganX = [0, 39, 75, 110, 147, 182, 216, 229, 263, 275, 310, 346, 358, 395, 431, 472, 507, 545].map((x) => x / sloganStretch).join(" ");

const Taskbar = () => (
  <div className="relative flex h-[50px] items-start overflow-hidden bg-[linear-gradient(100deg,#000_0%,#000_12%,#1c1c1c_33%,#333_48%,#484848_63%,#545454_75%,#545454_100%)] text-white">
    <svg width="600" height="50" viewBox="1300 0 600 50" className="absolute left-[1300px] top-0">
      <defs>
        <linearGradient id="rog" gradientUnits="userSpaceOnUse" x1="0" y1="0" x2="484" y2="0">
          <stop offset="0" stopColor="#000" /><stop offset=".28" stopColor="#0a0a0a" />
          <stop offset=".34" stopColor="#303030" /><stop offset=".5" stopColor="#444" />
          <stop offset=".62" stopColor="#3c3c3c" /><stop offset=".74" stopColor="#161616" /><stop offset="1" stopColor="#000" />
        </linearGradient>
      </defs>
      <g transform={`translate(1302 0) scale(${sloganStretch} 1)`}>
        <text x={sloganX} y="27" fontFamily="DejaVu Sans" fontWeight="700" fontSize="40" fill="url(#rog)">REPUBLIC OF GAMERS</text>
      </g>
      <path d="M1304 20v6l9 7V20zM1317 14l23 33V20z" fill="#030303" />
    </svg>
    <div className="relative flex h-[50px] w-[715px] items-center">
      <Svg w={20} h={20} className="ml-[20px]">
        <path d="M0 3l8.500-1.200v7.700H0zM9.500 1.600L20 0v9.500H9.500zM0 10.500h8.500v7.700L0 17zM9.500 10.500H20V20L9.500 18.400z" fill="#fff" />
      </Svg>
      <Svg w={21} h={20} className="ml-[40px]">
        <circle cx="13" cy="7" r="6.300" stroke="#fff" strokeWidth="1.400" /><path d="M8.500 11.500L.5 19.500" stroke="#fff" strokeWidth="1.400" />
      </Svg>
    </div>
    <div className="relative flex w-[560px]">
      <TaskSlot open>
        <Svg w={28} h={27}>
          <path d="M0 1.500Q0 0 1.500 0H11l2 3H0z" fill="#d99a06" />
          <path d="M0 4h12l1.500-1.500H27q1 0 1 1V23q0 1.500-1.500 1.500h-25Q0 24.500 0 23z" fill="#fdcf55" />
          <path d="M5 26V17q0-2.500 2.500-2.500h13Q23 14.500 23 17v9h-4.500v-6h-9v6z" fill="#3f9be0" />
        </Svg>
      </TaskSlot>
      <TaskSlot>
        <Svg w={27} h={27} className="-ml-px">
          <path d="M.7.7h25.600v25.600H.7z" fill="#10192a" stroke="#a8323f" strokeWidth="1.200" />
          <path d="M6 8.500v5.500l5 5h5zM20.500 8.500v5.500L18 16.500h-4.500z" fill="#f04a58" />
        </Svg>
      </TaskSlot>
      <TaskSlot>
        <Svg w={26} h={30}>
          <path d="M7 2l3-2h7l3 2 3-.5L25.500 5l-.8 2 1 3-3.500 13q-1 2.500-3 3.700L13 30l-6.200-3.300q-2-1.200-3-3.700L.3 10l1-3-.8-2L3 1.500z" fill="#f8431d" />
          <path d="M13 0h4l3 2 3-.5L25.500 5l-.8 2 1 3-3.500 13q-1 2.500-3 3.700L13 30z" fill="#ff2a00" opacity=".6" />
          <path d="M8 5l5 1 5-1 4 5-2 4.500.5 3L16 21l-3 3-3-3-4.500-3.500.5-3L4 10z" fill="#fff" />
          <path d="M6 9.500l5 1-1.200 2.500zM20 9.500l-5 1 1.200 2.500zM9.500 17.500L13 16l3.500 1.500L13 20z" fill="#f8431d" />
        </Svg>
      </TaskSlot>
      <TaskSlot>
        <Svg w={30} h={30}>
          <path d="M0 0h30v30H0z" fill="#1c1e1a" /><path d="M11 7h15.500v16H11z" fill="#76b900" />
          <path d="M3 15q8-9 17 0-8 9-17 0z" fill="#1c1e1a" stroke="#76b900" strokeWidth="1.300" />
          <path d="M7 15q5-5 10 0-5 5-10 0z" stroke="#76b900" strokeWidth="1.300" /><circle cx="12" cy="15" r="1.800" fill="#76b900" />
          <path d="M13 20.500q5 0 10-6.500" stroke="#1c1e1a" strokeWidth="1.500" />
        </Svg>
      </TaskSlot>
      <TaskSlot open>
        <Svg w={28} h={28}>
          <circle cx="14" cy="14" r="14" fill="#1da261" />
          <path d="M14 14L1.900 7A14 14 0 0126.100 7z" fill="#dd5144" />
          <path d="M14 7h12.100A14 14 0 0114 28l6.500-10.500z" fill="#ffce44" />
          <circle cx="14" cy="14" r="6.800" fill="#fff" /><circle cx="14" cy="14" r="5.300" fill="#4a8af4" />
        </Svg>
      </TaskSlot>
      <TaskSlot>
        <Svg w={30} h={30}>
          <path d="M22 0v8L3.500 22 .5 20v-2z" fill="#0078c0" /><path d="M22 30v-8L3.500 8 .5 10v2z" fill="#1487cf" />
          <path d="M21.500 0L30 3.500v23L21.500 30q1-.5 1-2V2q0-1.500-1-2z" fill="#25a5f2" />
        </Svg>
      </TaskSlot>
      <TaskSlot>
        <Svg w={30} h={30}>
          <circle cx="16" cy="5" r="4.500" fill="#7b83eb" /><circle cx="25" cy="6.500" r="3.200" fill="#5059c9" />
          <path d="M20 12h8.500q1 0 1 1v6q0 5-5 5H20z" fill="#5059c9" />
          <path d="M9 11.500h14.500V22a7.200 7.200 0 01-14.500 0z" fill="#7b83eb" />
          <rect y="8" width="14.500" height="14" rx="1.200" fill="#4b53bc" />
          <text x="7.200" y="19" fontSize="11" fontWeight="700" fill="#fff" textAnchor="middle">T</text>
        </Svg>
      </TaskSlot>
      <TaskSlot open><OfficeIcon letter="W" colors={["#41a5ee", "#2b7cd3", "#185abd", "#103f91"]} box="#1353b0" /></TaskSlot>
      <div className="flex h-[50px] w-[62px] shrink-0 flex-col items-center">
        <div className="flex h-[47px] items-center pr-px pt-[3px]">
          <OfficeIcon letter="X" colors={["#2bb673", "#21a366", "#107c41", "#185c37"]} box="#107c41" />
        </div>
        <div className="flex h-[3px] w-[51px]"><div className="w-[40px] bg-[#b5b3b2]" /><div className="ml-px w-[10px] bg-[#8b8b8b]" /></div>
      </div>
    </div>
    <div className="relative ml-[337px] flex h-[50px] items-center">
      <Svg w={16} h={9}><path d="M.7 8.300L8 1l7.300 7.300" stroke="#fff" strokeWidth="1.400" /></Svg>
      <Svg w={21} h={15} className="ml-[12px]">
        <path d="M5 3.500h13.500v9.500H4V9" stroke="#fff" strokeWidth="1.300" /><path d="M6.500 5.500H17V11H6.500zM19 6h1.500v4H19z" fill="#fff" />
        <path d="M0 2.500h5v2.500q0 2-2.500 2T0 5zM.7 0h1v3h-1zM3.400 0h1v3h-1zM2 7h1v5H2z" fill="#fff" />
      </Svg>
      <Svg w={16} h={16} className="ml-[12px]">
        <path d="M.7 15.500A15 15 0 0115 .8M4.500 15.500A11 11 0 0115 4.800" stroke="#ddd" strokeWidth="1.300" />
        <path d="M8 15.500A7 7 0 0115 8.600M11 15.500a4 4 0 014-3.500" stroke="#fff" strokeWidth="1.300" /><circle cx="14" cy="14.500" r="1.500" fill="#fff" />
      </Svg>
      <Svg w={21} h={18} className="ml-[11px]">
        <path d="M.7 6h3l4.600-4.500v15L3.700 12h-3z" stroke="#fff" strokeWidth="1.200" />
        <path d="M10.500 6.500q2 2.500 0 5M13.500 4.500q3 4.500 0 9" stroke="#fff" strokeWidth="1.200" />
        <path d="M17 1q4.500 8 0 16" stroke="#999" strokeWidth="1.200" />
      </Svg>
      <span className="ml-[12px] w-[45px] text-[15px] tracking-[-0.600px]">ENG</span>
      <div className="flex w-[67px] flex-col items-center whitespace-nowrap text-[15px] leading-[23.500px] tracking-[-0.450px]">
        <span>10:02 PM</span>
        <span>3/24/2021</span>
      </div>
      <Svg w={21} h={20} className="ml-[23px]">
        <path d="M.7.7h19.600v15.600h-6.800L10 19.500v-3.200H.7z" stroke="#fff" strokeWidth="1.300" />
      </Svg>
      <div className="ml-[24px] h-[50px] w-px bg-[#8a8a8a]" />
    </div>
  </div>
);

export default function App() {
  return (
    <div className="flex h-[1080px] w-[1920px] flex-col overflow-hidden bg-[#e6e6e6] font-['Open_Sans','Noto_Sans',sans-serif] [font-stretch:94%]">
      <div className="relative h-[81px] bg-[#217346]">
        <HeaderPattern />
        <TitleBar />
        <TabBar />
      </div>
      <Ribbon />
      <FormulaBar />
      <Sheet />
      <SheetTabs />
      <StatusBar />
      <Taskbar />
    </div>
  );
}
